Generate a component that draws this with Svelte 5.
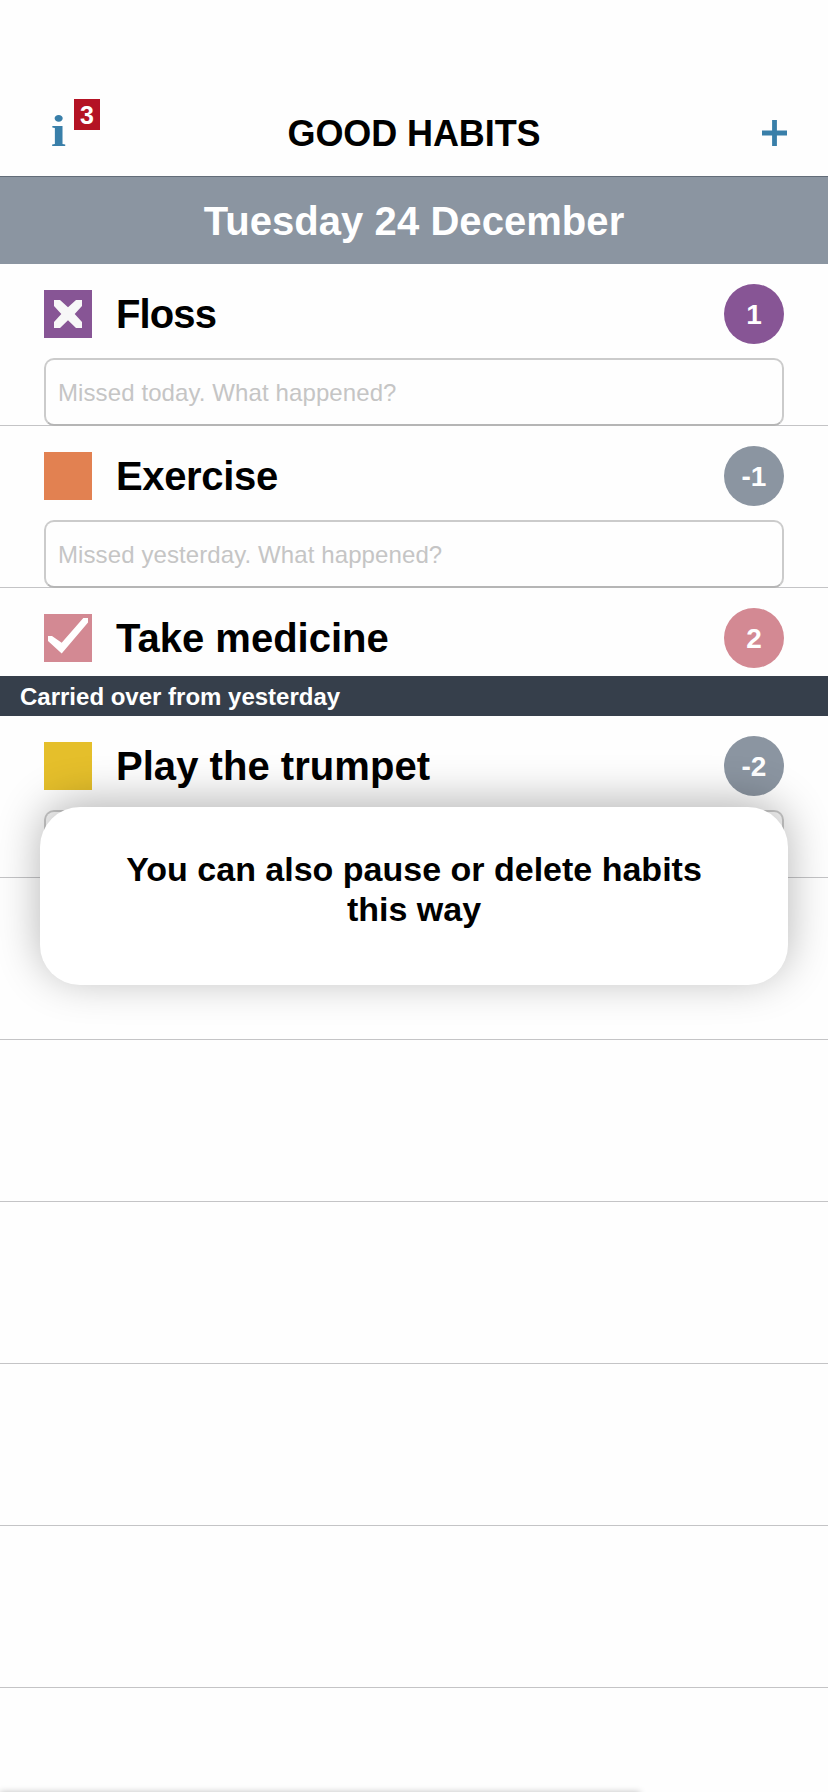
<script>
  const habits = [
    { name: 'Floss', color: '#875595', mark: 'missed', streak: 1, badge: '#875595', note: 'Missed today. What happened?', tracking: -0.9 },
    { name: 'Exercise', color: '#e28151', mark: '', streak: -1, badge: '#8b95a1', note: 'Missed yesterday. What happened?', tracking: -0.35 },
    { name: 'Take medicine', color: '#d38993', mark: 'done', streak: 2, badge: '#d38993', note: null, tracking: 0 }
  ];
  const carried = [
    { name: 'Play the trumpet', color: '#e5bf2b', mark: '', streak: -2, badge: '#8b95a1', note: '', tracking: 0.04 }
  ];
  const emptyRows = [1, 2, 3, 4, 5];
</script>

{#snippet row(h)}
  <section class="row" class:noted={h.note !== null}>
    <div class="main">
      <span class="box" style="background:{h.color}">
        {#if h.mark === 'missed'}
          <svg viewBox="0 0 48 48"><path fill="#f7f7f7" d="M10 10h6l8 7.300 8-7.300h6v6l-7.300 8 7.300 8v6h-6l-8-7.700-8 7.700h-6v-6l7.300-8-7.300-8z" /></svg>
        {:else if h.mark === 'done'}
          <svg viewBox="0 0 48 48"><path fill="#fff" d="M4 22h4l9.700 6.800L39.300 4H44v4.600L17.700 39.400 4 27z" /></svg>
        {/if}
      </span>
      <span class="name" style="letter-spacing:{h.tracking}px">{h.name}</span>
      <span class="streak" style="background:{h.badge}">{h.streak}</span>
    </div>
    {#if h.note !== null}
      <div class="note">{h.note}</div>
    {/if}
  </section>
{/snippet}

<div class="screen">
  <header>
    <div class="info"><span class="i">i</span><span class="count">3</span></div>
    <h1>GOOD HABITS</h1>
    <svg class="plus" viewBox="0 0 25 26"><path d="M12.500 0v26M0 13h25" stroke="#397fa9" stroke-width="4.800" /></svg>
  </header>
  <h2>Tuesday 24 December</h2>
  {#each habits as h}{@render row(h)}{/each}
  <h3>Carried over from yesterday</h3>
  {#each carried as h}{@render row(h)}{/each}
  {#each emptyRows as r}<div class="row noted"></div>{/each}
  <div class="tip">You can also pause or delete habits this way</div>
  <div class="sheet"></div>
</div>

<style>
  .screen {
    position: relative;
    width: 828px;
    height: 1792px;
    overflow: hidden;
    background: #fefefe;
    color: #000;
    font-family: 'Liberation Sans', Arial, sans-serif;
    font-weight: bold;
  }
  h1, h2, h3 { margin: 0; font-weight: bold; }
  header {
    box-sizing: border-box;
    height: 177px;
    padding: 88px 41px 0 51px;
    border-bottom: 1px solid #626c78;
    display: grid;
    grid-template-columns: 90px 1fr 100px;
  }
  .info { display: flex; align-items: flex-start; }
  .i {
    width: 23px;
    font: bold 45px/50px 'Liberation Serif', serif;
    color: #397fa9;
    margin-top: 18px;
    transform: scaleX(1.2);
    transform-origin: 0 0;
  }
  .count {
    width: 26px;
    height: 31px;
    margin-top: 11px;
    background: #b41324;
    color: #fff;
    font-size: 25px;
    line-height: 32px;
    text-align: center;
  }
  h1 {
    padding-top: 26px;
    font-size: 36px;
    line-height: 40px;
    letter-spacing: -0.1px;
    text-align: center;
    white-space: nowrap;
  }
  .plus { width: 25px; height: 26px; margin-top: 32px; justify-self: end; }
  h2 {
    height: 87px;
    background: #8b95a1;
    color: #fff;
    font-size: 40px;
    line-height: 88px;
    letter-spacing: 0.06px;
    text-align: center;
  }
  .row { box-sizing: border-box; height: 88px; padding: 20px 44px 0; }
  .noted { height: 162px; border-bottom: 1px solid #c4c4c6; }
  .main { display: flex; align-items: center; height: 60px; }
  .box { width: 48px; height: 48px; }
  .box svg { display: block; width: 48px; height: 48px; }
  .name { flex: 1; margin-left: 24px; font-size: 40px; line-height: 60px; }
  .streak {
    width: 60px;
    height: 60px;
    border-radius: 50%;
    color: #fff;
    font-size: 28px;
    line-height: 61px;
    text-align: center;
  }
  .note {
    box-sizing: border-box;
    height: 68px;
    margin-top: 14px;
    padding-left: 12px;
    border: 2px solid #cbcbcb;
    border-bottom-color: #b5b5b5;
    border-radius: 10px;
    color: #c5c5c5;
    font-size: 24px;
    font-weight: normal;
    line-height: 65px;
    letter-spacing: 0.1px;
  }
  h3 {
    height: 40px;
    padding-left: 20px;
    background: #363f4b;
    color: #fff;
    font-size: 24px;
    line-height: 41px;
  }
  .tip {
    box-sizing: border-box;
    position: absolute;
    left: 40px;
    top: 807px;
    width: 748px;
    height: 178px;
    padding: 42px 80px 0;
    border-radius: 40px;
    background: #fff;
    box-shadow: 0 -6px 44px rgba(0, 0, 0, 0.29);
    font-size: 34px;
    line-height: 40px;
    text-align: center;
  }
  .sheet {
    position: absolute;
    left: 0;
    top: 1792px;
    width: 640px;
    height: 20px;
    box-shadow: 0 0 6px rgba(0, 0, 0, 0.25);
  }
</style>
